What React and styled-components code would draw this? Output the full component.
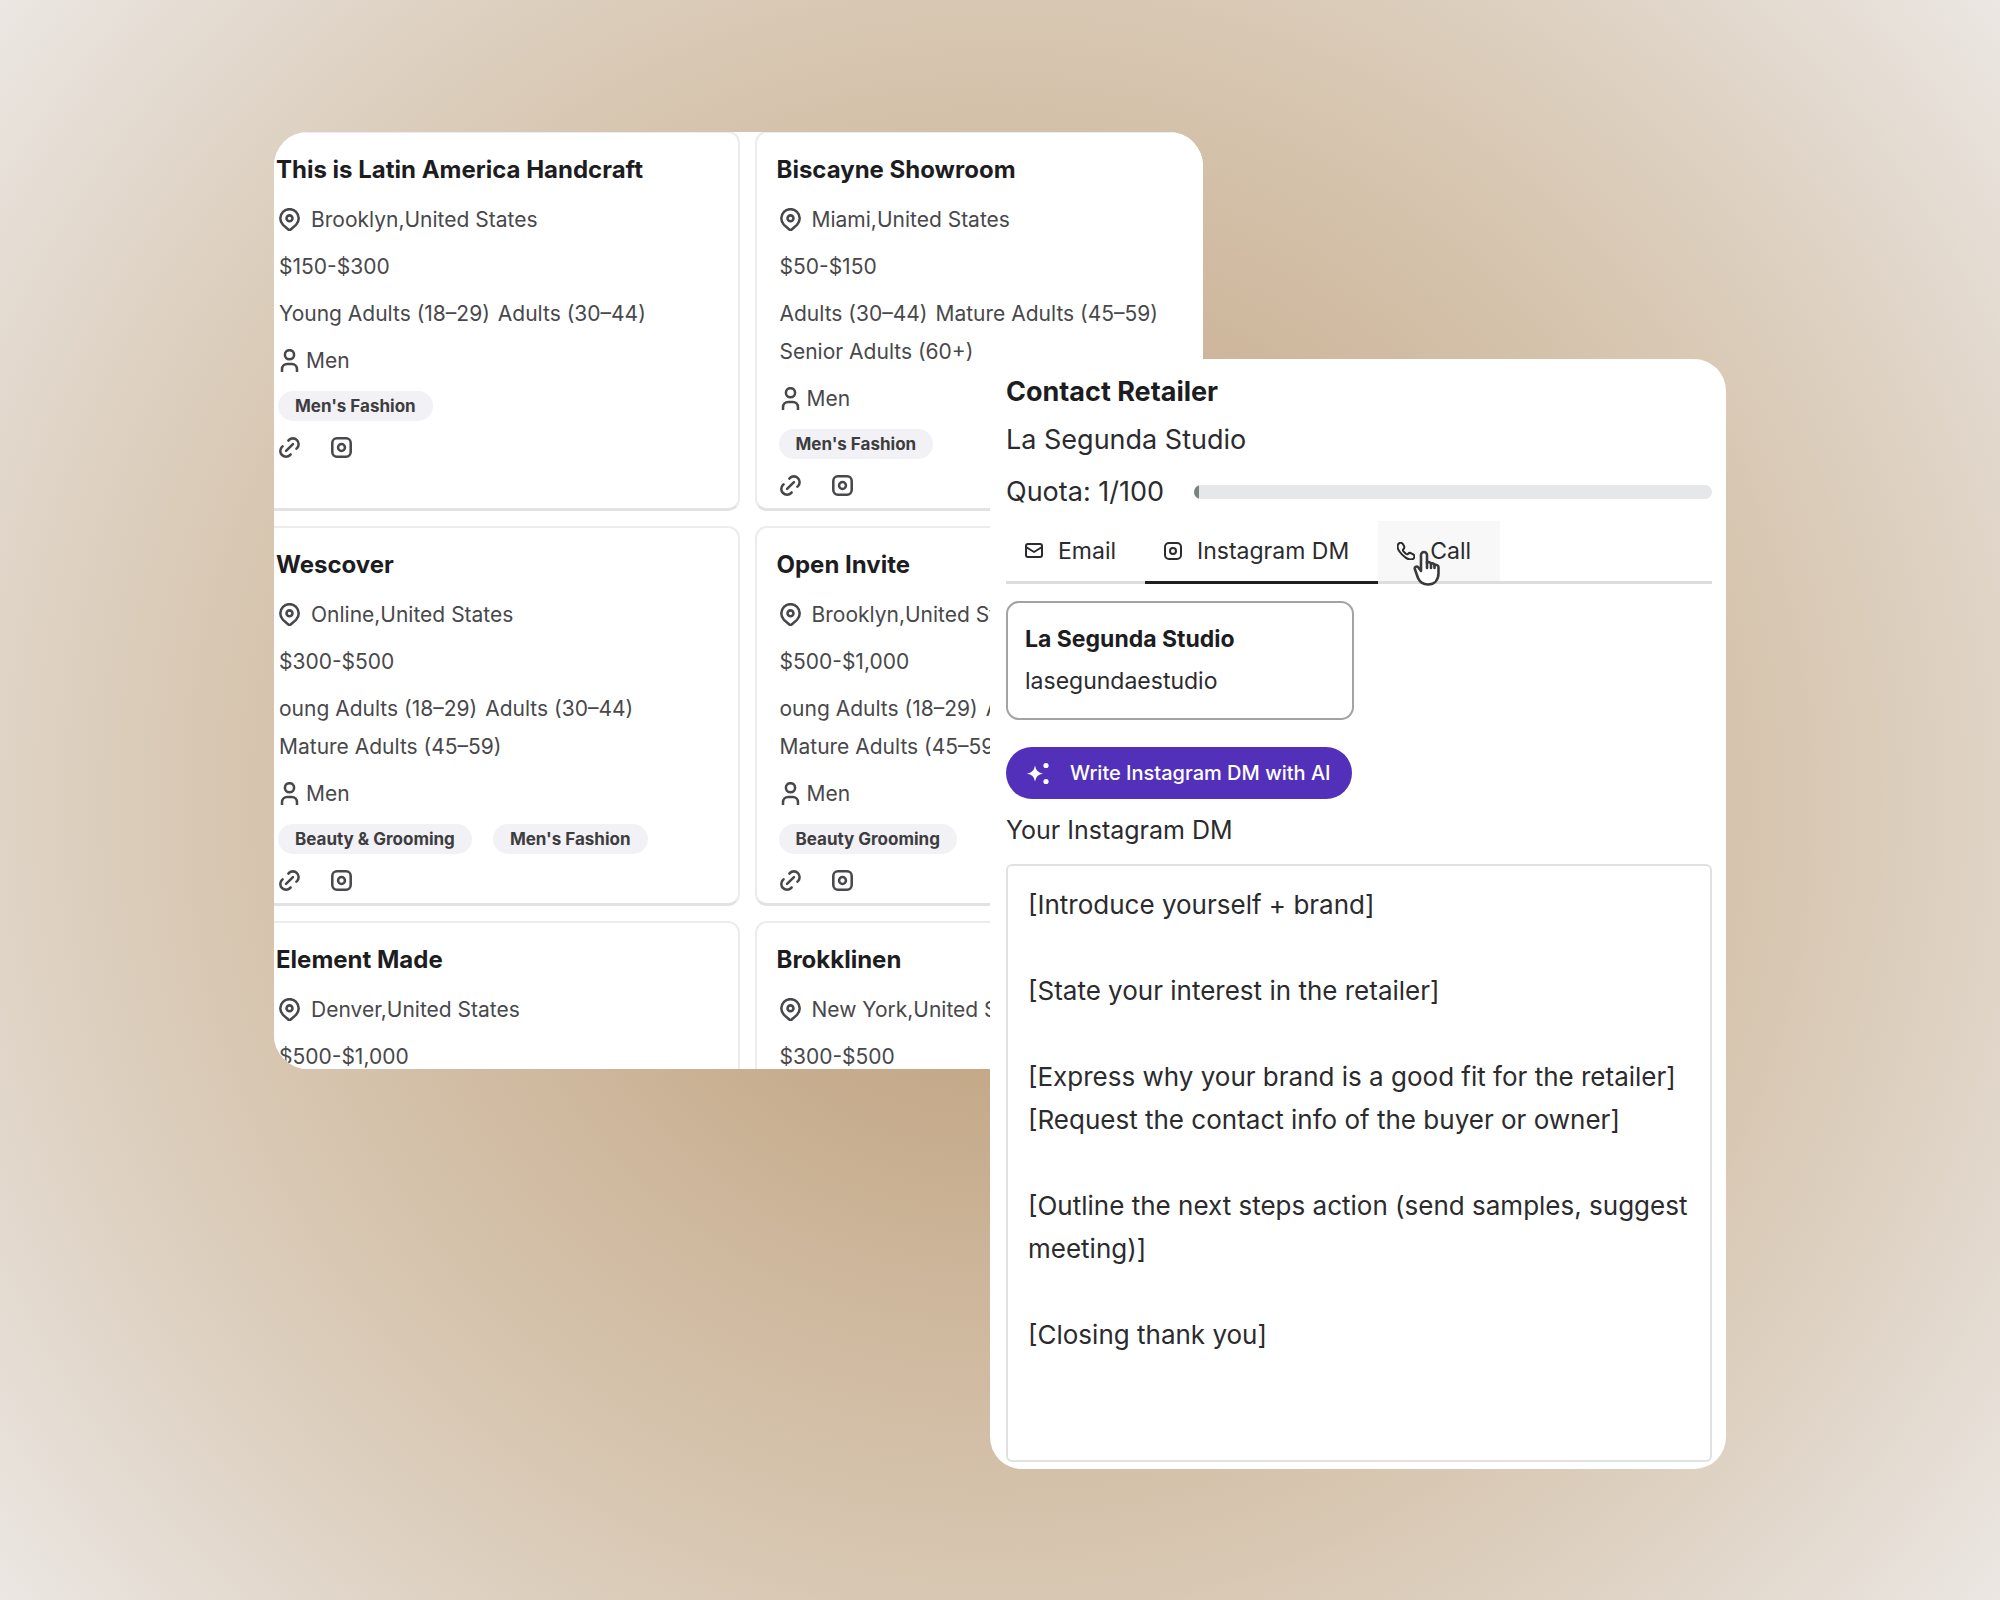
import React, { useState } from 'react';
import styled, { createGlobalStyle } from 'styled-components';

const retailers = [
  {
    name: 'This is Latin America Handcraft',
    location: 'Brooklyn,United States',
    price: '$150-$300',
    ages: ['Young Adults (18–29)', 'Adults (30–44)'],
    gender: 'Men',
    tags: ["Men's Fashion"],
  },
  {
    name: 'Biscayne Showroom',
    location: 'Miami,United States',
    price: '$50-$150',
    ages: ['Adults (30–44)', 'Mature Adults (45–59)', 'Senior Adults (60+)'],
    gender: 'Men',
    tags: ["Men's Fashion"],
  },
  {
    name: 'Wescover',
    location: 'Online,United States',
    price: '$300-$500',
    ages: ['oung Adults (18–29)', 'Adults (30–44)', 'Mature Adults (45–59)'],
    gender: 'Men',
    tags: ['Beauty & Grooming', "Men's Fashion"],
  },
  {
    name: 'Open Invite',
    location: 'Brooklyn,United States',
    price: '$500-$1,000',
    ages: ['oung Adults (18–29)', 'Adults (30–44)', 'Mature Adults (45–59)'],
    gender: 'Men',
    tags: ['Beauty Grooming'],
  },
  {
    name: 'Element Made',
    location: 'Denver,United States',
    price: '$500-$1,000',
    ages: [],
    tags: [],
  },
  {
    name: 'Brokklinen',
    location: 'New York,United States',
    price: '$300-$500',
    ages: [],
    tags: [],
  },
];

const template = `[Introduce yourself + brand]

[State your interest in the retailer]

[Express why your brand is a good fit for the retailer]
[Request the contact info of the buyer or owner]

[Outline the next steps action (send samples, suggest meeting)]

[Closing thank you]`;

const quota = { used: 1, total: 100 };

const PinIcon = () => (
  <CardIcon viewBox="3 2 18 20">
    <circle cx="12" cy="11" r="2.6" />
    <path d="M17.66 16.66l-4.9 4.3a1.2 1.2 0 0 1-1.52 0l-4.9-4.3a8 8 0 1 1 11.32 0z" />
  </CardIcon>
);

const UserIcon = () => (
  <CardIcon viewBox="3 2 18 20">
    <circle cx="12" cy="7" r="4" />
    <path d="M5.5 21.5v-2a4.5 4.5 0 0 1 4.5-4.5h4a4.5 4.5 0 0 1 4.5 4.5v2" />
  </CardIcon>
);

const LinkIcon = () => (
  <CardIcon viewBox="3 2 18 20">
    <path d="M9 15l6-6M11 6l.46-.54a5 5 0 0 1 7.07 7.07l-.53.47M13 18l-.4.53a5.07 5.07 0 0 1-7.13 0 4.97 4.97 0 0 1 0-7.07l.53-.46" />
  </CardIcon>
);

const InstagramShapes = () => (
  <>
    <rect x="4" y="4" width="16" height="16" rx="4" />
    <circle cx="12" cy="12" r="3" />
  </>
);

const tabs = [
  {
    label: 'Email',
    icon: (
      <>
        <rect x="4" y="5" width="16" height="13" rx="2" />
        <path d="M4 8l8 5 8-5" />
      </>
    ),
  },
  { label: 'Instagram DM', icon: <InstagramShapes /> },
  {
    label: 'Call',
    hovered: true,
    icon: (
      <path d="M4.600 4.700C6 3.400 8 3.600 9 5.200l1 1.700c.7 1.300.4 2.300-.7 3.300-.6.600-.4 1.400.2 2.200l2.300 2.300c.8.600 1.500.8 2.200.2 1-1.100 2.100-1.300 3.300-.6l1.900 1.100c1.500 1 1.700 2.800.4 4.100-1.800 1.600-4.700 1.300-8-.9a24 24 0 0 1-6.100-6.100C3.300 9.300 3 6.400 4.600 4.700z" />
    ),
  },
];

function RetailerCard({ retailer }) {
  return (
    <Card>
      <CardTitle>{retailer.name}</CardTitle>
      <CardRow $gap={11}>
        <PinIcon />
        {retailer.location}
      </CardRow>
      <CardRow>{retailer.price}</CardRow>
      {retailer.ages.length > 0 && (
        <Ages>
          {retailer.ages.map((age) => <span key={age}>{age}</span>)}
        </Ages>
      )}
      {retailer.gender && (
        <CardRow $gap={6}>
          <UserIcon />
          {retailer.gender}
        </CardRow>
      )}
      {retailer.tags.length > 0 && (
        <>
          <Tags>
            {retailer.tags.map((tag) => <Tag key={tag}>{tag}</Tag>)}
          </Tags>
          <Links>
            <a href="#website" aria-label="Website"><LinkIcon /></a>
            <a href="#instagram" aria-label="Instagram">
              <CardIcon viewBox="3 2 18 20"><InstagramShapes /></CardIcon>
            </a>
          </Links>
        </>
      )}
    </Card>
  );
}

function ContactRetailer() {
  const [active, setActive] = useState('Instagram DM');
  const [message, setMessage] = useState(template);

  return (
    <ContactPanel>
      <PanelTitle>Contact Retailer</PanelTitle>
      <PanelText>La Segunda Studio</PanelText>
      <QuotaRow>
        <PanelText>Quota: {quota.used}/{quota.total}</PanelText>
        <Meter role="progressbar" aria-valuenow={quota.used} aria-valuemax={quota.total} aria-label="Quota">
          <MeterFill style={{ width: `${(quota.used / quota.total) * 100}%` }} />
        </Meter>
      </QuotaRow>
      <TabList role="tablist">
        {tabs.map((tab) => (
          <Tab
            key={tab.label}
            role="tab"
            aria-selected={active === tab.label}
            $active={active === tab.label}
            $hovered={tab.hovered}
            onClick={() => setActive(tab.label)}
          >
            <TabIcon viewBox="3 3 18 18">{tab.icon}</TabIcon>
            {tab.label}
            {tab.hovered && (
              <HandCursor viewBox="0 0 28 36">
                <path d="M8 20V5a3 3 0 0 1 6 0v8c1-1.500 4-1 4 1 1-1.200 3.500-.6 3.500 1.200 1.500-.8 4 0 4 2V23c0 7-4 11.500-10.500 11.500-5 0-8-2-10-6.500L2 19.500c-1-2.500 1.600-4 3.400-2L8 21z" />
                <path d="M14 12v6M18 14v4M21.500 15v3" />
              </HandCursor>
            )}
          </Tab>
        ))}
      </TabList>
      <Account>
        <strong>La Segunda Studio</strong>
        <span>lasegundaestudio</span>
      </Account>
      <AiButton>
        <Sparkles viewBox="0 0 24 24">
          <path d="M9 4.500Q10 11.500 17 12.500Q10 13.500 9 20.500Q8 13.500 1 12.500Q8 11.500 9 4.500z" />
          <circle cx="20" cy="4.500" r="2.600" />
          <circle cx="20" cy="20.500" r="2.600" />
        </Sparkles>
        Write Instagram DM with AI
      </AiButton>
      <MessageLabel htmlFor="dm">Your Instagram DM</MessageLabel>
      <Message id="dm" value={message} spellCheck={false} onChange={(e) => setMessage(e.target.value)} />
    </ContactPanel>
  );
}

export default function App() {
  return (
    <Page>
      <GlobalStyle />
      <Stage>
        <RetailerPanel>
          <CardGrid>
            {retailers.map((retailer) => <RetailerCard key={retailer.name} retailer={retailer} />)}
          </CardGrid>
        </RetailerPanel>
        <ContactRetailer />
      </Stage>
    </Page>
  );
}

const GlobalStyle = createGlobalStyle`
  * {
    box-sizing: border-box;
  }
  body {
    margin: 0;
    font-family: Inter, 'Liberation Sans', Arial, sans-serif;
    color: #2b2b2d;
  }
  button, textarea {
    font-family: inherit;
    color: inherit;
  }
`;

const Page = styled.main`
  min-height: 100vh;
  display: flex;
  align-items: center;
  background: radial-gradient(circle at center, #c3a685 0%, #c4a888 20%, #cfb99f 42%, #d8c7b2 62%, #e0d5c8 80%, #ece7e3 100%);
`;

/* the two panels share the middle column, where the contact form lies on top */
const Stage = styled.div`
  width: 100%;
  padding: 0 13.7%;
  display: grid;
  grid-template-columns: 716fr 213fr 523fr;
  align-items: start;
`;

const RetailerPanel = styled.section`
  grid-area: 1 / 1 / 2 / 3;
  height: 937px;
  overflow: hidden;
  border-radius: 34px;
  background: #fff;
`;

const CardGrid = styled.div`
  display: grid;
  grid-template-columns: 1fr 1fr;
  grid-auto-rows: minmax(380px, auto);
  gap: 15px;
  margin: -1px -37px 0 -20px;
`;

const Card = styled.article`
  display: flex;
  flex-direction: column;
  gap: 9px;
  padding: 15px 20px 0;
  border: 2px solid #ececee;
  border-bottom: 3px solid #e2e2e5;
  border-radius: 12px;
  background: #fff;
  font-size: 21px;
  line-height: 38px;
  color: #48484b;
`;

const CardTitle = styled.h2`
  margin: 0;
  font-size: 24px;
  line-height: 44px;
  font-weight: 700;
  color: #1d1d1f;
`;

const CardRow = styled.div`
  display: flex;
  align-items: center;
  gap: ${({ $gap }) => $gap || 0}px;
  padding-left: 3px;
`;

const Ages = styled.div`
  display: flex;
  flex-wrap: wrap;
  column-gap: 8px;
  padding-left: 3px;
`;

const Tags = styled.div`
  display: flex;
  align-items: center;
  gap: 21px;
  height: 34px;
  padding-left: 2px;
`;

const Tag = styled.span`
  padding: 0 17px;
  border-radius: 15px;
  background: #f2f1f5;
  font-size: 17px;
  line-height: 30px;
  font-weight: 700;
  color: #3d3d40;
`;

const Links = styled.div`
  display: flex;
  align-items: center;
  gap: 31px;
  height: 32px;
  padding-left: 3px;
  & > a {
    display: flex;
    color: inherit;
  }
`;

const CardIcon = styled.svg`
  width: 21px;
  height: 23px;
  fill: none;
  stroke: #48484b;
  stroke-width: 2.2;
  stroke-linecap: round;
  stroke-linejoin: round;
`;

const ContactPanel = styled.section`
  grid-area: 1 / 2 / 2 / 4;
  display: flex;
  flex-direction: column;
  margin-top: 227px;
  padding: 10px 14px 7px 16px;
  border-radius: 32px;
  background: #fff;
`;

const PanelTitle = styled.h1`
  margin: 0;
  font-size: 27px;
  line-height: 46px;
  font-weight: 700;
  color: #1d1d1f;
`;

const PanelText = styled.span`
  font-size: 27px;
  line-height: 50px;
`;

const QuotaRow = styled.div`
  display: flex;
  align-items: center;
  gap: 30px;
  height: 54px;
`;

const Meter = styled.div`
  flex: 1;
  height: 14px;
  overflow: hidden;
  border-radius: 7px;
  background: #e6e7e9;
`;

const MeterFill = styled.div`
  height: 100%;
  background: #7b827c;
`;

const TabList = styled.div`
  display: flex;
  margin-top: 2px;
  box-shadow: inset 0 -3px #dcdcde;
`;

const Tab = styled.button`
  position: relative;
  display: flex;
  align-items: center;
  gap: 15px;
  height: 63px;
  padding: 0 29px 0 19px;
  border: 0;
  border-bottom: 3px solid ${({ $active }) => ($active ? '#1f1f21' : '#dcdcde')};
  background: ${({ $hovered }) => ($hovered ? '#f8f8f9' : 'transparent')};
  font-size: 23px;
`;

const TabIcon = styled.svg`
  width: 18px;
  height: 18px;
  fill: none;
  stroke: currentColor;
  stroke-width: 2;
  stroke-linejoin: round;
`;

const HandCursor = styled.svg`
  position: absolute;
  left: 35px;
  top: 29px;
  width: 28px;
  height: 36px;
  fill: #fff;
  stroke: #3a3a3c;
  stroke-width: 2.6;
  stroke-linecap: round;
  stroke-linejoin: round;
`;

const Account = styled.div`
  display: flex;
  flex-direction: column;
  justify-content: center;
  width: 348px;
  height: 119px;
  margin-top: 17px;
  padding: 0 17px;
  border: 2px solid #a3a3a5;
  border-radius: 13px;
  font-size: 23px;
  line-height: 42px;
  & > strong {
    font-weight: 700;
    color: #1d1d1f;
  }
`;

const AiButton = styled.button`
  display: flex;
  align-items: center;
  gap: 20px;
  align-self: flex-start;
  width: 346px;
  height: 52px;
  margin-top: 27px;
  padding: 0 20px;
  border: 0;
  border-radius: 26px;
  background: #5230ba;
  color: #fff;
  font-size: 20px;
  font-weight: 500;
  white-space: nowrap;
`;

const Sparkles = styled.svg`
  width: 24px;
  height: 24px;
  fill: #fff;
`;

const MessageLabel = styled.label`
  margin-top: 6px;
  font-size: 25px;
  line-height: 50px;
`;

const Message = styled.textarea`
  display: block;
  height: 598px;
  margin-top: 9px;
  padding: 17px 10px 17px 20px;
  overflow: hidden;
  resize: none;
  outline: 0;
  border: 2px solid #e0e1e3;
  border-radius: 6px;
  background: #fff;
  font-size: 26px;
  line-height: 43px;
`;
